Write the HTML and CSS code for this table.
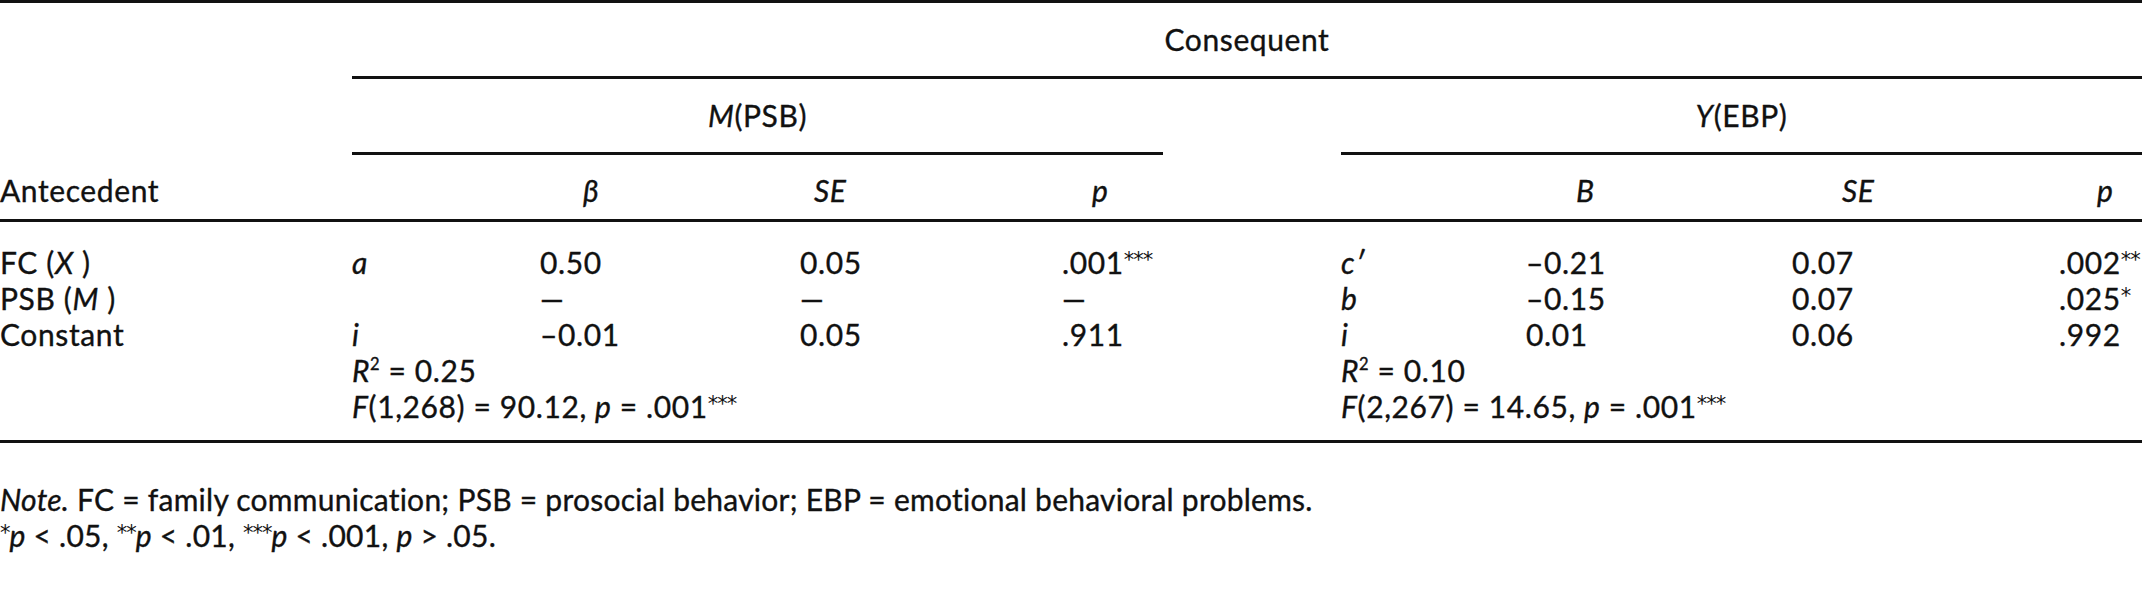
FILE: index.html
```html
<!DOCTYPE html>
<html lang="en">
<head>
<meta charset="utf-8">
<title>Mediation model table</title>
<link rel="stylesheet" href="styles.css">
</head>
<body>
<div class="tbl">
  <div class="cell conseq">Consequent</div>

  <div class="cell grp grp-l"><i>M</i>(PSB)</div>
  <div class="cell grp grp-r"><i>Y</i>(EBP)</div>

  <div class="cell hd c1">Antecedent</div>
  <div class="cell hd c3 h-beta"><i>β</i></div>
  <div class="cell hd c4 h-se1"><i>SE</i></div>
  <div class="cell hd c5w h-p1"><i>p</i></div>
  <div class="cell hd c8 h-b"><i>B</i></div>
  <div class="cell hd c9 h-se2"><i>SE</i></div>
  <div class="cell hd c10 h-p2"><i>p</i></div>

  <div class="rule"></div>
  <div class="gap-top"></div>

  <div class="cell row c1">FC (<i>X</i> )</div>
  <div class="cell row c2"><i>a</i></div>
  <div class="cell row c3">0.50</div>
  <div class="cell row c4">0.05</div>
  <div class="cell row c5w">.001<span class="ast">***</span></div>
  <div class="cell row c7"><i>c′</i></div>
  <div class="cell row c8">–0.21</div>
  <div class="cell row c9">0.07</div>
  <div class="cell row c10">.002<span class="ast">**</span></div>

  <div class="cell row c1">PSB (<i>M</i> )</div>
  <div class="cell row c3">—</div>
  <div class="cell row c4">—</div>
  <div class="cell row c5w">—</div>
  <div class="cell row c7"><i>b</i></div>
  <div class="cell row c8">–0.15</div>
  <div class="cell row c9">0.07</div>
  <div class="cell row c10">.025<span class="ast">*</span></div>

  <div class="cell row c1">Constant</div>
  <div class="cell row c2"><i>i</i></div>
  <div class="cell row c3">–0.01</div>
  <div class="cell row c4">0.05</div>
  <div class="cell row c5w">.911</div>
  <div class="cell row c7"><i>i</i></div>
  <div class="cell row c8">0.01</div>
  <div class="cell row c9">0.06</div>
  <div class="cell row c10">.992</div>

  <div class="cell row span-l"><i>R</i><sup class="sq">2</sup> = 0.25</div>
  <div class="cell row span-r"><i>R</i><sup class="sq">2</sup> = 0.10</div>

  <div class="cell row span-l"><i>F</i>(1,268) = 90.12, <i>p</i> = .001<span class="ast">***</span></div>
  <div class="cell row span-r"><i>F</i>(2,267) = 14.65, <i>p</i> = .001<span class="ast">***</span></div>

  <div class="gap-bottom"></div>
</div>

<div class="notes">
  <p class="note"><i>Note.</i> FC = family communication; PSB = prosocial behavior; EBP = emotional behavioral problems.</p>
  <p class="note"><span class="ast">*</span><i>p</i> &lt; .05, <span class="ast">**</span><i>p</i> &lt; .01, <span class="ast">***</span><i>p</i> &lt; .001, <i>p</i> &gt; .05.</p>
</div>
</body>
</html>
```

FILE: styles.css
```css
html, body {
  margin: 0;
  padding: 0;
  background: #ffffff;
}

body {
  width: 2142px;
  overflow: hidden;
  font-family: "Lato", "Noto Sans", "DejaVu Sans", sans-serif;
  font-size: 30px;
  letter-spacing: 0.6px;
  color: #111111;
  -webkit-text-stroke: 0.35px #111111;
}

i {
  font-style: italic;
}

.tbl {
  display: grid;
  grid-template-columns: 352px 188px 260px 262px 101px 178px 185px 266px 267px 83px;
  border-top: 3px solid #111;
  border-bottom: 3px solid #111;
}

.cell {
  white-space: nowrap;
}

.conseq {
  grid-column: 2 / 11;
  height: 73px;
  line-height: 73px;
  text-align: center;
  border-bottom: 3px solid #111;
}

.grp {
  height: 73px;
  line-height: 73px;
  text-align: center;
  border-bottom: 3px solid #111;
}

.grp-l { grid-column: 2 / 6; }
.grp-r { grid-column: 7 / 11; }

.hd {
  height: 64px;
  padding-top: 14px;
  line-height: 42px;
  box-sizing: border-box;
}

.rule {
  grid-column: 1 / -1;
  height: 3px;
  background: #111;
}

.gap-top {
  grid-column: 1 / -1;
  height: 22px;
}

.gap-bottom {
  grid-column: 1 / -1;
  height: 16px;
}

.row {
  line-height: 36px;
}

.c1 { grid-column: 1; }
.c2 { grid-column: 2; }
.c3 { grid-column: 3; }
.c4 { grid-column: 4; }
.c5w { grid-column: 5 / 7; }
.c7 { grid-column: 7; }
.c8 { grid-column: 8; }
.c9 { grid-column: 9; }
.c10 { grid-column: 10; }

.span-l { grid-column: 2 / 6; }
.span-r { grid-column: 7 / 11; }

.h-beta { padding-left: 43px; }
.h-se1 { padding-left: 14px; }
.h-p1 { padding-left: 30px; }
.h-b { padding-left: 50px; }
.h-se2 { padding-left: 50px; }
.h-p2 { padding-left: 38px; }

.ast {
  font-family: "DejaVu Sans", sans-serif;
  font-size: 0.7em;
  vertical-align: 7px;
  line-height: 0;
  letter-spacing: -1px;
  -webkit-text-stroke: 0;
}

.sq {
  font-size: 0.55em;
  vertical-align: 12px;
  line-height: 0;
}

.notes {
  margin-top: 38px;
}

.note {
  margin: 0;
  line-height: 36px;
  letter-spacing: 0.25px;
  white-space: nowrap;
}
```
